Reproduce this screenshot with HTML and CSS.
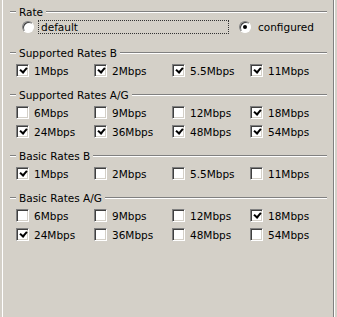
FILE: index.html
```html
<!DOCTYPE html>
<html>
<head>
<meta charset="utf-8">
<link rel="stylesheet" href="styles.css">
</head>
<body>
<div class="panel">
  <div class="group first">
    <div class="legend"><span>Rate</span></div>
    <div class="radio-row">
      <span class="radio"></span>
      <span class="focus">default</span>
      <span class="radio on"></span>
      <span class="rlabel">configured</span>
    </div>
  </div>

  <div class="group">
    <div class="legend"><span>Supported Rates B</span></div>
    <div class="grid">
      <label class="cb"><span class="box on"></span>1Mbps</label>
      <label class="cb"><span class="box on"></span>2Mbps</label>
      <label class="cb"><span class="box on"></span>5.5Mbps</label>
      <label class="cb"><span class="box on"></span>11Mbps</label>
    </div>
  </div>

  <div class="group">
    <div class="legend"><span>Supported Rates A/G</span></div>
    <div class="grid">
      <label class="cb"><span class="box"></span>6Mbps</label>
      <label class="cb"><span class="box"></span>9Mbps</label>
      <label class="cb"><span class="box"></span>12Mbps</label>
      <label class="cb"><span class="box on"></span>18Mbps</label>
      <label class="cb"><span class="box on"></span>24Mbps</label>
      <label class="cb"><span class="box on"></span>36Mbps</label>
      <label class="cb"><span class="box on"></span>48Mbps</label>
      <label class="cb"><span class="box on"></span>54Mbps</label>
    </div>
  </div>

  <div class="group">
    <div class="legend"><span>Basic Rates B</span></div>
    <div class="grid">
      <label class="cb"><span class="box on"></span>1Mbps</label>
      <label class="cb"><span class="box"></span>2Mbps</label>
      <label class="cb"><span class="box"></span>5.5Mbps</label>
      <label class="cb"><span class="box"></span>11Mbps</label>
    </div>
  </div>

  <div class="group">
    <div class="legend"><span>Basic Rates A/G</span></div>
    <div class="grid">
      <label class="cb"><span class="box"></span>6Mbps</label>
      <label class="cb"><span class="box"></span>9Mbps</label>
      <label class="cb"><span class="box"></span>12Mbps</label>
      <label class="cb"><span class="box on"></span>18Mbps</label>
      <label class="cb"><span class="box on"></span>24Mbps</label>
      <label class="cb"><span class="box"></span>36Mbps</label>
      <label class="cb"><span class="box"></span>48Mbps</label>
      <label class="cb"><span class="box"></span>54Mbps</label>
    </div>
  </div>
</div>
</body>
</html>
```
FILE: styles.css
```css
html, body {
  margin: 0;
  padding: 0;
  background: #d4d0c8;
}
body {
  font-family: "DejaVu Sans", Verdana, sans-serif;
  font-size: 10.5px;
  color: #000;
}
.panel {
  box-sizing: border-box;
  height: 317px;
  width: 332px;
  margin-left: 2px;
  border-left: 1px solid #fff;
  border-right: 1px solid #808080;
  box-shadow: 1px 0 0 #fff;
  padding: 5px 6px 0 7px;
}
.group {
  margin-top: 8px;
}
.group.first {
  margin-top: 0;
  padding-bottom: 3px;
}
.legend {
  display: flex;
  align-items: center;
  height: 14px;
  line-height: 14px;
}
.legend::before,
.legend::after {
  content: "";
  height: 0;
  border-top: 1px solid #808080;
  border-bottom: 1px solid #fff;
}
.legend::before {
  width: 6px;
  margin-right: 3px;
}
.legend::after {
  flex: 1;
  margin-left: 3px;
}
.radio-row {
  display: flex;
  align-items: center;
  height: 16px;
  padding-left: 12px;
}
.radio {
  position: relative;
  box-sizing: border-box;
  width: 12px;
  height: 12px;
  border-radius: 50%;
  background: #fff;
  border: 1px solid;
  border-color: #808080 #fff #fff #808080;
  box-shadow: inset 1px 1px 0 #404040;
  flex: none;
}
.radio.on::after {
  content: "";
  position: absolute;
  left: 3px;
  top: 3px;
  width: 4px;
  height: 4px;
  border-radius: 50%;
  background: #000;
}
.focus {
  box-sizing: border-box;
  width: 191px;
  height: 14px;
  line-height: 12px;
  margin-left: 4px;
  padding-left: 2px;
  border: 1px dotted #333;
}
.radio.on {
  margin-left: 10px;
}
.rlabel {
  margin-left: 7px;
}
.grid {
  display: grid;
  grid-template-columns: repeat(4, 78px);
  grid-auto-rows: 19px;
  margin-top: 1px;
  padding-left: 6px;
}
.cb {
  display: flex;
  align-items: center;
  white-space: nowrap;
}
.box {
  position: relative;
  box-sizing: border-box;
  width: 13px;
  height: 13px;
  margin-right: 5px;
  background: #fff;
  border: 1px solid;
  border-color: #808080 #fff #fff #808080;
  box-shadow: inset 1px 1px 0 #404040, inset -1px -1px 0 #d4d0c8;
  flex: none;
}
.box.on::after {
  content: "";
  position: absolute;
  left: 3px;
  top: 2px;
  width: 5px;
  height: 3px;
  border-left: 2px solid #000;
  border-bottom: 2px solid #000;
  transform: rotate(-50deg);
  transform-origin: center;
}
```
